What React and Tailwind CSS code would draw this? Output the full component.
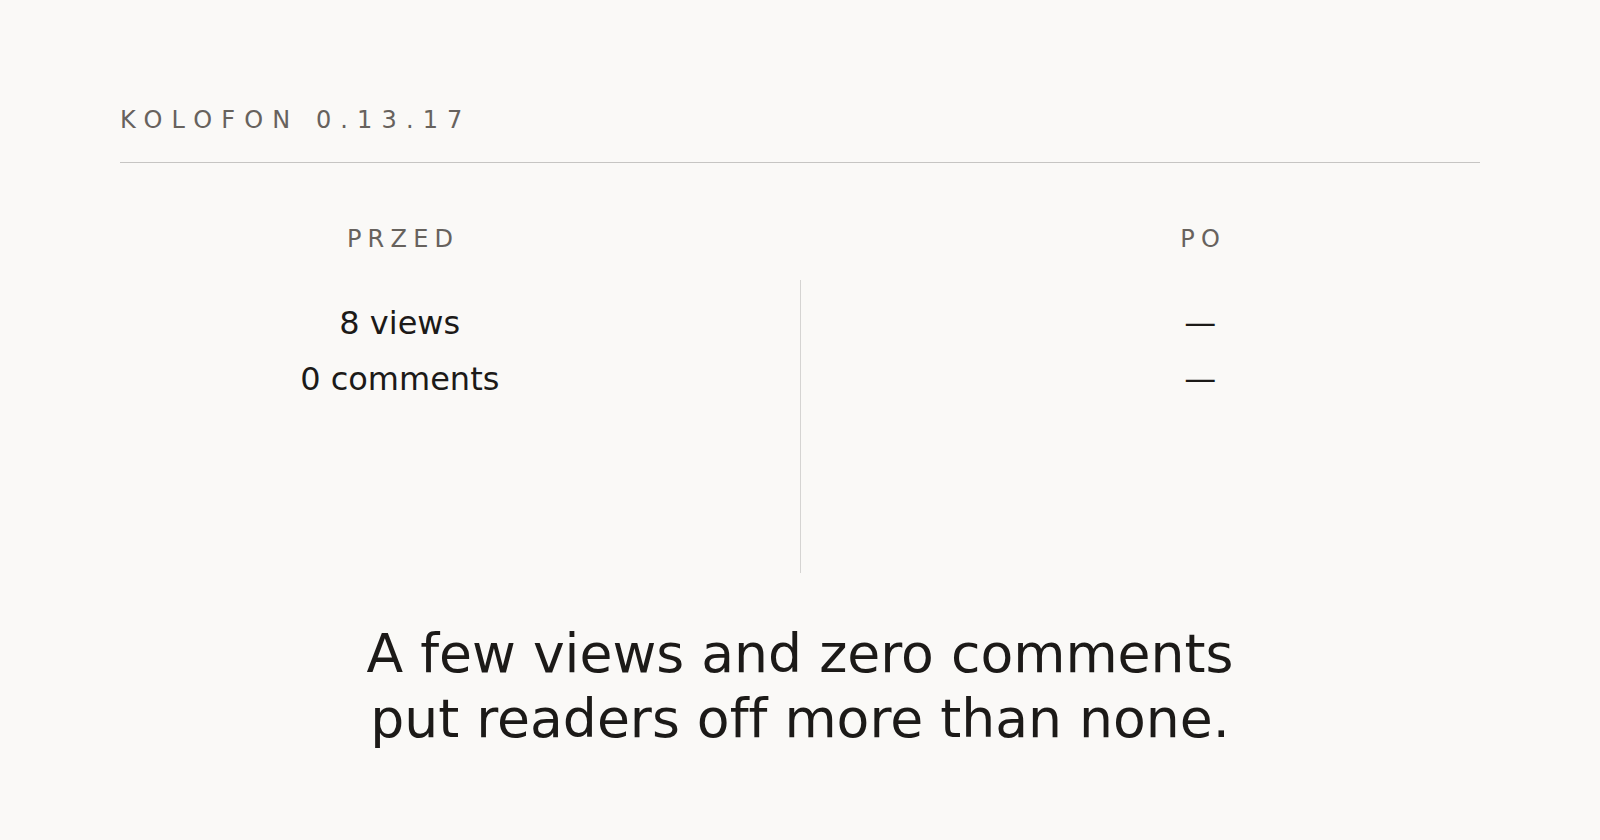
export default function App() {
  const font = { fontFamily: '"DejaVu Sans", Verdana, sans-serif' };
  return (
    <div className="w-full h-[840px] bg-[#faf9f7] overflow-hidden [font-variant-ligatures:none]" style={font}>
      <div className="px-[120px] pt-[108px]">
        <div className="text-[24px] leading-[24px] tracking-[0.38em] text-[#67625d]">KOLOFON 0.13.17</div>
        <div className="mt-[30px] h-px bg-[#c6c5c3]" />
      </div>
      <div className="mt-[64px] grid grid-cols-2">
        <div className="text-center text-[24px] leading-[24px] tracking-[0.26em] pl-[0.26em] text-[#67625d]">PRZED</div>
        <div className="text-center text-[24px] leading-[24px] tracking-[0.26em] pl-[0.26em] text-[#67625d]">PO</div>
      </div>
      <div className="mt-[29px] h-[293px] grid grid-cols-[1fr_1px_1fr]">
        <div className="pt-[15px] text-center text-[32px] leading-[56px] text-[#1c1a18]">
          <div>8 views</div>
          <div>0 comments</div>
        </div>
        <div className="bg-[#d5d4d2]" />
        <div className="pt-[15px] text-center text-[32px] leading-[56px] text-[#1c1a18]">
          <div>—</div>
          <div>—</div>
        </div>
      </div>
      <div className="mt-[48px] text-center text-[53.6px] leading-[65px] text-[#1c1a18]">
        <div>A few views and zero comments</div>
        <div>put readers off more than none.</div>
      </div>
    </div>
  );
}
